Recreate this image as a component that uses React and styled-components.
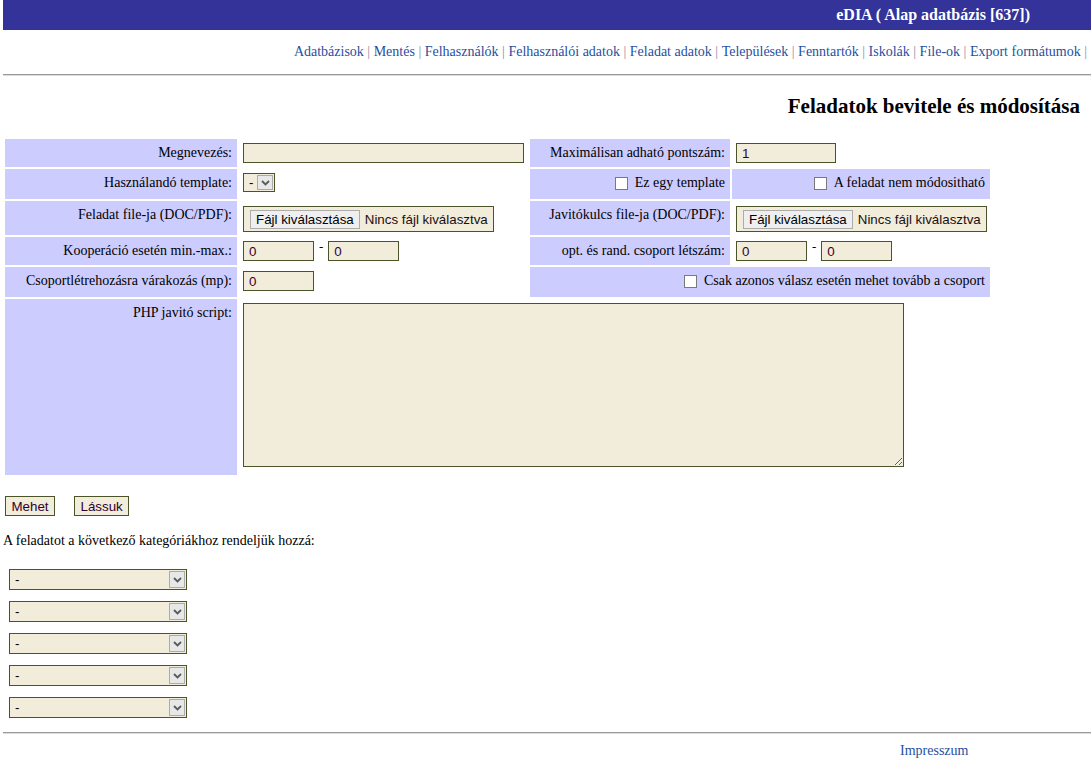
import React from "react";
import styled, { createGlobalStyle } from "styled-components";

const Global = createGlobalStyle`
  html, body { margin: 0; padding: 0; background: #fff; }
  body {
    margin: 0 0 0 3px;
    font-family: "Liberation Serif", "Times New Roman", serif;
    font-size: 14px;
    color: #000;
  }
  * { box-sizing: border-box; }
`;

const TopBar = styled.header`
  height: 30px;
  background: #333399;
  color: #fff;
  display: flex;
  align-items: center;
  justify-content: flex-end;
  padding-right: 61px;
  font: bold 16px "Liberation Serif", "Times New Roman", serif;
`;

const Nav = styled.nav`
  display: flex;
  justify-content: flex-end;
  padding: 14px 4px 0 0;
  line-height: 16px;
  font-size: 14px;
`;

const NavLink = styled.a`
  color: #1f4f9f;
  text-decoration: none;
`;

const Sep = styled.span`
  color: #8a8aa8;
  margin: 0 3.5px;
  &:last-child { margin-right: 0; }
`;

const Rule = styled.div`
  border-top: 1px solid #9a9a9a;
  border-bottom: 1px solid #dcdcdc;
  margin-top: ${(p) => p.$top}px;
`;

const PageTitle = styled.h1`
  margin: 19px 11px 0 0;
  text-align: right;
  font: bold 21px/22px "Liberation Serif", "Times New Roman", serif;
`;

const FormGrid = styled.div`
  margin-top: 20px;
  display: grid;
  grid-template-columns: 232px 289px 200px 258px;
  grid-template-rows: 28px 30px 34px 28px 30px 176px;
  gap: 2px;
  padding: 2px;
  width: max-content;
`;

const LabelCell = styled.div`
  background: #ccccff;
  text-align: right;
  padding: 6px 5px 0 4px;
  line-height: 16px;
  white-space: nowrap;
  grid-column: ${(p) => p.$span || "auto"};
`;

const CheckCell = styled.label`
  background: #ccccff;
  display: flex;
  justify-content: flex-end;
  align-items: flex-start;
  gap: 7px;
  padding: 6px 5px 0 4px;
  line-height: 16px;
  white-space: nowrap;
  grid-column: ${(p) => p.$span || "auto"};
`;

const FieldCell = styled.div`
  display: flex;
  align-items: flex-start;
  padding: 4px;
  grid-column: ${(p) => p.$span || "auto"};
`;

const TextInput = styled.input`
  width: ${(p) => p.$w}px;
  height: 20px;
  margin: 0;
  padding: 0 5px;
  border: 1px solid #4b5328;
  border-radius: 0;
  background: #f2ecda;
  color: #330033;
  font: 13.33px "Liberation Sans", Arial, sans-serif;
  outline: none;
`;

const Dash = styled.span`
  padding: 0 5px 0 5px;
  line-height: 12px;
  font-size: 13px;
`;

const Check = styled.input`
  appearance: none;
  width: 13px;
  height: 13px;
  margin: 2px 0 0 0;
  border: 1px solid #7a7a7a;
  border-radius: 0;
  background: #fff;
  flex: none;
`;

const SelectWrap = styled.div`
  position: relative;
  width: ${(p) => p.$w}px;
  height: ${(p) => p.$h}px;
  flex: none;
`;

const NativeSelect = styled.select`
  appearance: none;
  width: 100%;
  height: 100%;
  margin: 0;
  padding: 0 0 0 5px;
  border: 1px solid #4b5328;
  border-radius: 0;
  background: #f2ecda;
  color: #000;
  font: 13.33px "Liberation Sans", Arial, sans-serif;
  outline: none;
`;

const ArrowBox = styled.span`
  position: absolute;
  right: 2px;
  top: 2px;
  bottom: 2px;
  width: 16px;
  background: #e8e8e8;
  border: 1px solid #ababab;
  display: flex;
  align-items: center;
  justify-content: center;
  pointer-events: none;
`;

const FileBox = styled.div`
  display: flex;
  align-items: center;
  width: 251px;
  height: 26px;
  margin-top: 1px;
  padding: 0 6px;
  border: 1px solid #4b5328;
  background: #f2ecda;
  font: 13.33px "Liberation Sans", Arial, sans-serif;
  color: #1a0f0f;
  white-space: nowrap;
`;

const FileButton = styled.button`
  height: 19px;
  margin: 0 5px 0 0;
  padding: 0 5px;
  border: 1px solid #acacac;
  border-radius: 0;
  background: #efefef;
  color: #000;
  font: 13.33px "Liberation Sans", Arial, sans-serif;
`;

const ScriptArea = styled.textarea`
  width: 661px;
  height: 164px;
  margin: 0;
  border: 1px solid #4b5328;
  border-radius: 0;
  background: #f2ecda;
  resize: both;
  outline: none;
`;

const ButtonRow = styled.div`
  display: flex;
  gap: 19px;
  padding-left: 2px;
  margin-top: 19px;
`;

const SubmitButton = styled.button`
  height: 20px;
  padding: 0 5.5px;
  margin: 0;
  border: 1px solid #4b5328;
  border-radius: 0;
  background: #f2ecda;
  color: #300030;
  font: 13.33px "Liberation Sans", Arial, sans-serif;
`;

const Intro = styled.p`
  margin: 17px 0 0 0;
  line-height: 16px;
`;

const CategoryList = styled.div`
  display: flex;
  flex-direction: column;
  gap: 11px;
  margin-top: 20px;
  padding-left: 6px;
`;

const Footer = styled.footer`
  padding: 9px 0 0 897px;
  line-height: 16px;
`;

const Chevron = () => (
  <svg width="9" height="6" viewBox="0 0 9 6">
    <path d="M1 1 L4.5 4.5 L8 1" fill="none" stroke="#5a5a5a" strokeWidth="1.8" />
  </svg>
);

const Select = ({ w, h }) => (
  <SelectWrap $w={w} $h={h}>
    <NativeSelect defaultValue="-">
      <option>-</option>
    </NativeSelect>
    <ArrowBox>
      <Chevron />
    </ArrowBox>
  </SelectWrap>
);

const FileField = () => (
  <FileBox>
    <FileButton type="button">Fájl kiválasztása</FileButton>
    <span>Nincs fájl kiválasztva</span>
  </FileBox>
);

const navItems = [
  "Adatbázisok",
  "Mentés",
  "Felhasználók",
  "Felhasználói adatok",
  "Feladat adatok",
  "Települések",
  "Fenntartók",
  "Iskolák",
  "File-ok",
  "Export formátumok",
];

export default function App() {
  return (
    <>
      <Global />
      <TopBar>eDIA ( Alap adatbázis [637])</TopBar>
      <Nav>
        {navItems.map((n) => (
          <React.Fragment key={n}>
            <NavLink href="#">{n}</NavLink>
            <Sep>|</Sep>
          </React.Fragment>
        ))}
      </Nav>
      <Rule $top={14} />
      <PageTitle>Feladatok bevitele és módosítása</PageTitle>
      <FormGrid>
        <LabelCell>Megnevezés:</LabelCell>
        <FieldCell>
          <TextInput $w={281} defaultValue="" />
        </FieldCell>
        <LabelCell>Maximálisan adható pontszám:</LabelCell>
        <FieldCell>
          <TextInput $w={100} defaultValue="1" />
        </FieldCell>

        <LabelCell>Használandó template:</LabelCell>
        <FieldCell>
          <Select w={32} h={19} />
        </FieldCell>
        <CheckCell>
          <Check type="checkbox" />
          <span>Ez egy template</span>
        </CheckCell>
        <CheckCell>
          <Check type="checkbox" />
          <span>A feladat nem módositható</span>
        </CheckCell>

        <LabelCell>Feladat file-ja (DOC/PDF):</LabelCell>
        <FieldCell>
          <FileField />
        </FieldCell>
        <LabelCell>Javitókulcs file-ja (DOC/PDF):</LabelCell>
        <FieldCell>
          <FileField />
        </FieldCell>

        <LabelCell>Kooperáció esetén min.-max.:</LabelCell>
        <FieldCell>
          <TextInput $w={71} defaultValue="0" />
          <Dash>-</Dash>
          <TextInput $w={71} defaultValue="0" />
        </FieldCell>
        <LabelCell>opt. és rand. csoport létszám:</LabelCell>
        <FieldCell>
          <TextInput $w={71} defaultValue="0" />
          <Dash>-</Dash>
          <TextInput $w={71} defaultValue="0" />
        </FieldCell>

        <LabelCell>Csoportlétrehozásra várakozás (mp):</LabelCell>
        <FieldCell>
          <TextInput $w={71} defaultValue="0" />
        </FieldCell>
        <CheckCell $span="span 2">
          <Check type="checkbox" />
          <span>Csak azonos válasz esetén mehet tovább a csoport</span>
        </CheckCell>

        <LabelCell>PHP javitó script:</LabelCell>
        <FieldCell $span="span 3">
          <ScriptArea />
        </FieldCell>
      </FormGrid>

      <ButtonRow>
        <SubmitButton type="button">Mehet</SubmitButton>
        <SubmitButton type="button">Lássuk</SubmitButton>
      </ButtonRow>

      <Intro>A feladatot a következő kategóriákhoz rendeljük hozzá:</Intro>

      <CategoryList>
        {[0, 1, 2, 3, 4].map((i) => (
          <Select key={i} w={178} h={21} />
        ))}
      </CategoryList>

      <Rule $top={14} />
      <Footer>
        <NavLink href="#">Impresszum</NavLink>
      </Footer>
    </>
  );
}
